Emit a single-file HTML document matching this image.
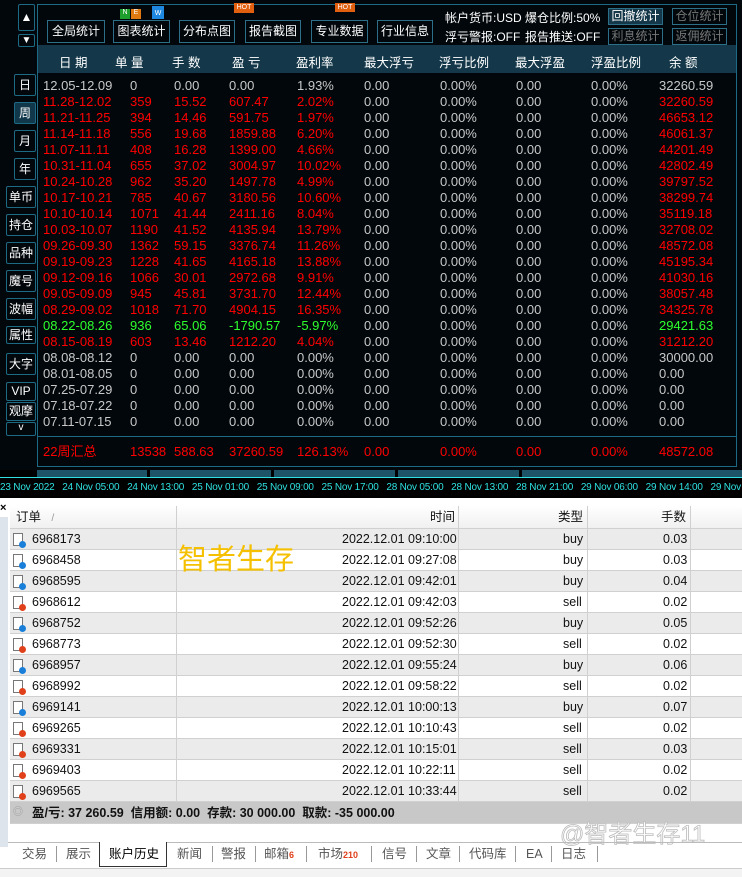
<!DOCTYPE html>
<html><head><meta charset="utf-8"><style>
*{margin:0;padding:0;box-sizing:border-box}
body{width:742px;height:877px;overflow:hidden;background:#fff;font-family:"Liberation Sans","Noto Sans CJK SC",sans-serif;position:relative}
.top{position:absolute;left:0;top:0;width:742px;height:470px;background:#02070b}
.a{position:absolute;white-space:nowrap}
.nb{position:absolute;border:1px solid #1d6a85;color:#fff;font-size:12px;text-align:center;background:#02070b;border-radius:2px}
.box{position:absolute;left:37px;top:4px;width:700px;height:463px;border:1px solid #1d6a85}
.btn{position:absolute;top:20px;height:23px;border:1px solid #2b6f88;color:#fff;font-size:12px;line-height:21px;text-align:center}
.hdr{position:absolute;left:38px;top:45px;width:698px;height:28px;background:#14384a}
.hdr span,.r span{position:absolute}
.hdr span{color:#fff;font-size:12.5px;top:7px}
.r{position:absolute;left:0;width:742px;height:16px;font-size:13px;line-height:16px;color:#c8c8c8}
.red{color:#f00}.grn{color:#2dff2d}
.g{color:#c8c8c8!important}
.tl{position:absolute;top:470px;left:0;width:742px;height:28px;background:#000}
.tb{position:absolute;left:10px;top:506px;width:732px;font-size:12.5px;color:#111}
.row{position:absolute;left:0;width:732px;height:21px;border-bottom:1px solid #d0d0d0;line-height:20px}
.row span{position:absolute}
.row i{position:absolute;top:0;bottom:0;border-left:1px solid #d0d0d0}
.ic{position:absolute;left:3px;top:4px;width:10px;height:13px;border:1px solid #777;background:#fff}
.ic b{position:absolute;left:5px;top:7px;width:7px;height:7px;border-radius:50%}
.tab{position:absolute;top:845px;height:18px;line-height:18px;font-size:12.5px;color:#555}
.sep{position:absolute;top:846px;height:16px;border-left:1px solid #999}
</style></head><body>
<div class="top">
<div class="nb" style="left:18px;top:4px;width:17px;height:27px;line-height:25px">▲</div>
<div class="nb" style="left:18px;top:34px;width:17px;height:13px;line-height:11px;font-size:10px">▼</div>
<div class="nb" style="left:14px;top:74px;width:22px;height:22px;line-height:20px">日</div>
<div class="nb" style="left:14px;top:102px;width:22px;height:22px;line-height:20px;background:#10384a">周</div>
<div class="nb" style="left:14px;top:130px;width:22px;height:22px;line-height:20px">月</div>
<div class="nb" style="left:14px;top:158px;width:22px;height:22px;line-height:20px">年</div>
<div class="nb" style="left:6px;top:186px;width:30px;height:22px;line-height:20px">单币</div>
<div class="nb" style="left:6px;top:214px;width:30px;height:22px;line-height:20px">持仓</div>
<div class="nb" style="left:6px;top:242px;width:30px;height:22px;line-height:20px">品种</div>
<div class="nb" style="left:6px;top:270px;width:30px;height:22px;line-height:20px">魔号</div>
<div class="nb" style="left:6px;top:298px;width:30px;height:22px;line-height:20px">波幅</div>
<div class="nb" style="left:6px;top:326px;width:30px;height:18px;line-height:16px">属性</div>
<div class="nb" style="left:6px;top:353px;width:30px;height:22px;line-height:20px">大字</div>
<div class="nb" style="left:6px;top:382px;width:30px;height:19px;line-height:17px">VIP</div>
<div class="nb" style="left:6px;top:402px;width:30px;height:19px;line-height:17px">观摩</div>
<div class="nb" style="left:6px;top:422px;width:30px;height:14px;line-height:10px;font-size:10px">v</div>
<div class="box"></div>
<div class="btn" style="left:47px;width:58px">全局统计</div>
<div class="btn" style="left:113px;width:57px">图表统计</div>
<div class="btn" style="left:179px;width:56px">分布点图</div>
<div class="btn" style="left:245px;width:56px">报告截图</div>
<div class="btn" style="left:311px;width:57px">专业数据</div>
<div class="btn" style="left:377px;width:56px">行业信息</div>
<div class="a" style="left:120px;top:9px;width:10px;height:10px;background:#1e9e2c;color:#fff;font-size:7px;text-align:center">N</div>
<div class="a" style="left:131px;top:9px;width:10px;height:10px;background:#e07a10;color:#fff;font-size:7px;text-align:center">E</div>
<div class="a" style="left:152px;top:6px;width:12px;height:13px;background:#1e88e0;color:#fff;font-size:7px;text-align:center;line-height:16px">W</div>
<div class="a" style="left:234px;top:3px;width:20px;height:10px;background:#e06010;color:#fff;font-size:7px;text-align:center;line-height:10px">HOT</div>
<div class="a" style="left:335px;top:3px;width:20px;height:9px;background:#e06010;color:#fff;font-size:7px;text-align:center;line-height:9px">HOT</div>
<div class="a" style="left:445px;top:9px;color:#fff;font-size:12px">帐户货币:USD</div>
<div class="a" style="left:525px;top:9px;color:#fff;font-size:12px">爆仓比例:50%</div>
<div class="a" style="left:445px;top:28px;color:#fff;font-size:12px">浮亏警报:OFF</div>
<div class="a" style="left:525px;top:28px;color:#fff;font-size:12px">报告推送:OFF</div>
<div class="a" style="left:608px;top:8px;width:55px;height:17px;border:1px solid #2b6f88;background:#14384a;color:#fff;font-size:12px;text-align:center;line-height:15px">回撤统计</div>
<div class="a" style="left:672px;top:8px;width:55px;height:17px;border:1px solid #2b6f88;color:#777;font-size:12px;text-align:center;line-height:15px">仓位统计</div>
<div class="a" style="left:608px;top:28px;width:55px;height:17px;border:1px solid #2b6f88;color:#777;font-size:12px;text-align:center;line-height:15px">利息统计</div>
<div class="a" style="left:672px;top:28px;width:55px;height:17px;border:1px solid #2b6f88;color:#777;font-size:12px;text-align:center;line-height:15px">返佣统计</div>
<div class="hdr">
<span style="left:21px">日 期</span><span style="left:77px">单 量</span><span style="left:134px">手 数</span><span style="left:194px">盈 亏</span><span style="left:258px">盈利率</span><span style="left:326px">最大浮亏</span><span style="left:401px">浮亏比例</span><span style="left:477px">最大浮盈</span><span style="left:553px">浮盈比例</span><span style="left:631px">余 额</span>
</div>
<div class="a" style="left:38px;top:436px;width:698px;border-top:1px solid #1d6a85"></div>
</div>
<div class="r" style="top:78px"><span style="left:43px">12.05-12.09</span><span style="left:130px">0</span><span style="left:174px">0.00</span><span style="left:229px">0.00</span><span style="left:297px">1.93%</span><span style="left:364px">0.00</span><span style="left:440px">0.00%</span><span style="left:516px">0.00</span><span style="left:591px">0.00%</span><span style="left:659px">32260.59</span></div>
<div class="r red" style="top:94px"><span style="left:43px">11.28-12.02</span><span style="left:130px">359</span><span style="left:174px">15.52</span><span style="left:229px">607.47</span><span style="left:297px">2.02%</span><span class="g" style="left:364px">0.00</span><span class="g" style="left:440px">0.00%</span><span class="g" style="left:516px">0.00</span><span class="g" style="left:591px">0.00%</span><span style="left:659px">32260.59</span></div>
<div class="r red" style="top:110px"><span style="left:43px">11.21-11.25</span><span style="left:130px">394</span><span style="left:174px">14.46</span><span style="left:229px">591.75</span><span style="left:297px">1.97%</span><span class="g" style="left:364px">0.00</span><span class="g" style="left:440px">0.00%</span><span class="g" style="left:516px">0.00</span><span class="g" style="left:591px">0.00%</span><span style="left:659px">46653.12</span></div>
<div class="r red" style="top:126px"><span style="left:43px">11.14-11.18</span><span style="left:130px">556</span><span style="left:174px">19.68</span><span style="left:229px">1859.88</span><span style="left:297px">6.20%</span><span class="g" style="left:364px">0.00</span><span class="g" style="left:440px">0.00%</span><span class="g" style="left:516px">0.00</span><span class="g" style="left:591px">0.00%</span><span style="left:659px">46061.37</span></div>
<div class="r red" style="top:142px"><span style="left:43px">11.07-11.11</span><span style="left:130px">408</span><span style="left:174px">16.28</span><span style="left:229px">1399.00</span><span style="left:297px">4.66%</span><span class="g" style="left:364px">0.00</span><span class="g" style="left:440px">0.00%</span><span class="g" style="left:516px">0.00</span><span class="g" style="left:591px">0.00%</span><span style="left:659px">44201.49</span></div>
<div class="r red" style="top:158px"><span style="left:43px">10.31-11.04</span><span style="left:130px">655</span><span style="left:174px">37.02</span><span style="left:229px">3004.97</span><span style="left:297px">10.02%</span><span class="g" style="left:364px">0.00</span><span class="g" style="left:440px">0.00%</span><span class="g" style="left:516px">0.00</span><span class="g" style="left:591px">0.00%</span><span style="left:659px">42802.49</span></div>
<div class="r red" style="top:174px"><span style="left:43px">10.24-10.28</span><span style="left:130px">962</span><span style="left:174px">35.20</span><span style="left:229px">1497.78</span><span style="left:297px">4.99%</span><span class="g" style="left:364px">0.00</span><span class="g" style="left:440px">0.00%</span><span class="g" style="left:516px">0.00</span><span class="g" style="left:591px">0.00%</span><span style="left:659px">39797.52</span></div>
<div class="r red" style="top:190px"><span style="left:43px">10.17-10.21</span><span style="left:130px">785</span><span style="left:174px">40.67</span><span style="left:229px">3180.56</span><span style="left:297px">10.60%</span><span class="g" style="left:364px">0.00</span><span class="g" style="left:440px">0.00%</span><span class="g" style="left:516px">0.00</span><span class="g" style="left:591px">0.00%</span><span style="left:659px">38299.74</span></div>
<div class="r red" style="top:206px"><span style="left:43px">10.10-10.14</span><span style="left:130px">1071</span><span style="left:174px">41.44</span><span style="left:229px">2411.16</span><span style="left:297px">8.04%</span><span class="g" style="left:364px">0.00</span><span class="g" style="left:440px">0.00%</span><span class="g" style="left:516px">0.00</span><span class="g" style="left:591px">0.00%</span><span style="left:659px">35119.18</span></div>
<div class="r red" style="top:222px"><span style="left:43px">10.03-10.07</span><span style="left:130px">1190</span><span style="left:174px">41.52</span><span style="left:229px">4135.94</span><span style="left:297px">13.79%</span><span class="g" style="left:364px">0.00</span><span class="g" style="left:440px">0.00%</span><span class="g" style="left:516px">0.00</span><span class="g" style="left:591px">0.00%</span><span style="left:659px">32708.02</span></div>
<div class="r red" style="top:238px"><span style="left:43px">09.26-09.30</span><span style="left:130px">1362</span><span style="left:174px">59.15</span><span style="left:229px">3376.74</span><span style="left:297px">11.26%</span><span class="g" style="left:364px">0.00</span><span class="g" style="left:440px">0.00%</span><span class="g" style="left:516px">0.00</span><span class="g" style="left:591px">0.00%</span><span style="left:659px">48572.08</span></div>
<div class="r red" style="top:254px"><span style="left:43px">09.19-09.23</span><span style="left:130px">1228</span><span style="left:174px">41.65</span><span style="left:229px">4165.18</span><span style="left:297px">13.88%</span><span class="g" style="left:364px">0.00</span><span class="g" style="left:440px">0.00%</span><span class="g" style="left:516px">0.00</span><span class="g" style="left:591px">0.00%</span><span style="left:659px">45195.34</span></div>
<div class="r red" style="top:270px"><span style="left:43px">09.12-09.16</span><span style="left:130px">1066</span><span style="left:174px">30.01</span><span style="left:229px">2972.68</span><span style="left:297px">9.91%</span><span class="g" style="left:364px">0.00</span><span class="g" style="left:440px">0.00%</span><span class="g" style="left:516px">0.00</span><span class="g" style="left:591px">0.00%</span><span style="left:659px">41030.16</span></div>
<div class="r red" style="top:286px"><span style="left:43px">09.05-09.09</span><span style="left:130px">945</span><span style="left:174px">45.81</span><span style="left:229px">3731.70</span><span style="left:297px">12.44%</span><span class="g" style="left:364px">0.00</span><span class="g" style="left:440px">0.00%</span><span class="g" style="left:516px">0.00</span><span class="g" style="left:591px">0.00%</span><span style="left:659px">38057.48</span></div>
<div class="r red" style="top:302px"><span style="left:43px">08.29-09.02</span><span style="left:130px">1018</span><span style="left:174px">71.70</span><span style="left:229px">4904.15</span><span style="left:297px">16.35%</span><span class="g" style="left:364px">0.00</span><span class="g" style="left:440px">0.00%</span><span class="g" style="left:516px">0.00</span><span class="g" style="left:591px">0.00%</span><span style="left:659px">34325.78</span></div>
<div class="r grn" style="top:318px"><span style="left:43px">08.22-08.26</span><span style="left:130px">936</span><span style="left:174px">65.06</span><span style="left:229px">-1790.57</span><span style="left:297px">-5.97%</span><span class="g" style="left:364px">0.00</span><span class="g" style="left:440px">0.00%</span><span class="g" style="left:516px">0.00</span><span class="g" style="left:591px">0.00%</span><span style="left:659px">29421.63</span></div>
<div class="r red" style="top:334px"><span style="left:43px">08.15-08.19</span><span style="left:130px">603</span><span style="left:174px">13.46</span><span style="left:229px">1212.20</span><span style="left:297px">4.04%</span><span class="g" style="left:364px">0.00</span><span class="g" style="left:440px">0.00%</span><span class="g" style="left:516px">0.00</span><span class="g" style="left:591px">0.00%</span><span style="left:659px">31212.20</span></div>
<div class="r" style="top:350px"><span style="left:43px">08.08-08.12</span><span style="left:130px">0</span><span style="left:174px">0.00</span><span style="left:229px">0.00</span><span style="left:297px">0.00%</span><span style="left:364px">0.00</span><span style="left:440px">0.00%</span><span style="left:516px">0.00</span><span style="left:591px">0.00%</span><span style="left:659px">30000.00</span></div>
<div class="r" style="top:366px"><span style="left:43px">08.01-08.05</span><span style="left:130px">0</span><span style="left:174px">0.00</span><span style="left:229px">0.00</span><span style="left:297px">0.00%</span><span style="left:364px">0.00</span><span style="left:440px">0.00%</span><span style="left:516px">0.00</span><span style="left:591px">0.00%</span><span style="left:659px">0.00</span></div>
<div class="r" style="top:382px"><span style="left:43px">07.25-07.29</span><span style="left:130px">0</span><span style="left:174px">0.00</span><span style="left:229px">0.00</span><span style="left:297px">0.00%</span><span style="left:364px">0.00</span><span style="left:440px">0.00%</span><span style="left:516px">0.00</span><span style="left:591px">0.00%</span><span style="left:659px">0.00</span></div>
<div class="r" style="top:398px"><span style="left:43px">07.18-07.22</span><span style="left:130px">0</span><span style="left:174px">0.00</span><span style="left:229px">0.00</span><span style="left:297px">0.00%</span><span style="left:364px">0.00</span><span style="left:440px">0.00%</span><span style="left:516px">0.00</span><span style="left:591px">0.00%</span><span style="left:659px">0.00</span></div>
<div class="r" style="top:414px"><span style="left:43px">07.11-07.15</span><span style="left:130px">0</span><span style="left:174px">0.00</span><span style="left:229px">0.00</span><span style="left:297px">0.00%</span><span style="left:364px">0.00</span><span style="left:440px">0.00%</span><span style="left:516px">0.00</span><span style="left:591px">0.00%</span><span style="left:659px">0.00</span></div>
<div class="r red" style="top:444px"><span style="left:43px">22周汇总</span><span style="left:130px">13538</span><span style="left:174px">588.63</span><span style="left:229px">37260.59</span><span style="left:297px">126.13%</span><span style="left:364px">0.00</span><span style="left:440px">0.00%</span><span style="left:516px">0.00</span><span style="left:591px">0.00%</span><span style="left:659px">48572.08</span></div>
<div class="tl">
<div class="a" style="left:37px;top:0;width:110px;height:7px;background:#1d5468"></div>
<div class="a" style="left:150px;top:0;width:121px;height:7px;background:#1d5468"></div>
<div class="a" style="left:274px;top:0;width:121px;height:7px;background:#1d5468"></div>
<div class="a" style="left:398px;top:0;width:121px;height:7px;background:#1d5468"></div>
<div class="a" style="left:522px;top:0;width:220px;height:7px;background:#1d5468"></div>
<div class="a" style="left:0;top:7px;width:742px;border-top:1px solid #2fe0e0"></div>
<div class="a" style="left:0;top:12px;color:#2fe0e0;font-size:10px;letter-spacing:-0.2px">23 Nov 2022 &nbsp; 24 Nov 05:00 &nbsp; 24 Nov 13:00 &nbsp; 25 Nov 01:00 &nbsp; 25 Nov 09:00 &nbsp; 25 Nov 17:00 &nbsp; 28 Nov 05:00 &nbsp; 28 Nov 13:00 &nbsp; 28 Nov 21:00 &nbsp; 29 Nov 06:00 &nbsp; 29 Nov 14:00 &nbsp; 29 Nov 22</div>
</div>
<div class="a" style="left:0;top:498px;width:742px;height:379px;background:#fff"></div>
<div class="a" style="left:0;top:517px;width:8px;height:330px;background:#dde4ec"></div>
<div class="a" style="left:0;top:502px;font-size:11px;font-weight:bold">×</div>
<div class="tb">
<div class="row" style="top:0;height:23px;background:linear-gradient(#fff,#f0f0f0)"><span style="left:6px;top:1px">订单 &nbsp; <small style="color:#999">/</small></span><span style="left:420px;top:1px">时间</span><span style="left:548px;top:1px">类型</span><span style="left:651px;top:1px">手数</span><i style="left:166px"></i><i style="left:448px"></i><i style="left:577px"></i><i style="left:680px"></i></div>
</div>
<div class="tb" style="top:529px">
<div class="row" style="top:0;background:#ebebeb"><div class="ic"><b style="background:#1a7fd8"></b></div><span style="left:22px">6968173</span><span style="left:332px">2022.12.01 09:10:00</span><span style="left:553px">buy</span><span style="left:653px">0.03</span><i style="left:166px"></i><i style="left:448px"></i><i style="left:577px"></i><i style="left:680px"></i></div>
<div class="row" style="top:21px;background:#fff"><div class="ic"><b style="background:#1a7fd8"></b></div><span style="left:22px">6968458</span><span style="left:332px">2022.12.01 09:27:08</span><span style="left:553px">buy</span><span style="left:653px">0.03</span><i style="left:166px"></i><i style="left:448px"></i><i style="left:577px"></i><i style="left:680px"></i></div>
<div class="row" style="top:42px;background:#ebebeb"><div class="ic"><b style="background:#1a7fd8"></b></div><span style="left:22px">6968595</span><span style="left:332px">2022.12.01 09:42:01</span><span style="left:553px">buy</span><span style="left:653px">0.04</span><i style="left:166px"></i><i style="left:448px"></i><i style="left:577px"></i><i style="left:680px"></i></div>
<div class="row" style="top:63px;background:#fff"><div class="ic"><b style="background:#e0401a"></b></div><span style="left:22px">6968612</span><span style="left:332px">2022.12.01 09:42:03</span><span style="left:553px">sell</span><span style="left:653px">0.02</span><i style="left:166px"></i><i style="left:448px"></i><i style="left:577px"></i><i style="left:680px"></i></div>
<div class="row" style="top:84px;background:#ebebeb"><div class="ic"><b style="background:#1a7fd8"></b></div><span style="left:22px">6968752</span><span style="left:332px">2022.12.01 09:52:26</span><span style="left:553px">buy</span><span style="left:653px">0.05</span><i style="left:166px"></i><i style="left:448px"></i><i style="left:577px"></i><i style="left:680px"></i></div>
<div class="row" style="top:105px;background:#fff"><div class="ic"><b style="background:#e0401a"></b></div><span style="left:22px">6968773</span><span style="left:332px">2022.12.01 09:52:30</span><span style="left:553px">sell</span><span style="left:653px">0.02</span><i style="left:166px"></i><i style="left:448px"></i><i style="left:577px"></i><i style="left:680px"></i></div>
<div class="row" style="top:126px;background:#ebebeb"><div class="ic"><b style="background:#1a7fd8"></b></div><span style="left:22px">6968957</span><span style="left:332px">2022.12.01 09:55:24</span><span style="left:553px">buy</span><span style="left:653px">0.06</span><i style="left:166px"></i><i style="left:448px"></i><i style="left:577px"></i><i style="left:680px"></i></div>
<div class="row" style="top:147px;background:#fff"><div class="ic"><b style="background:#e0401a"></b></div><span style="left:22px">6968992</span><span style="left:332px">2022.12.01 09:58:22</span><span style="left:553px">sell</span><span style="left:653px">0.02</span><i style="left:166px"></i><i style="left:448px"></i><i style="left:577px"></i><i style="left:680px"></i></div>
<div class="row" style="top:168px;background:#ebebeb"><div class="ic"><b style="background:#1a7fd8"></b></div><span style="left:22px">6969141</span><span style="left:332px">2022.12.01 10:00:13</span><span style="left:553px">buy</span><span style="left:653px">0.07</span><i style="left:166px"></i><i style="left:448px"></i><i style="left:577px"></i><i style="left:680px"></i></div>
<div class="row" style="top:189px;background:#fff"><div class="ic"><b style="background:#e0401a"></b></div><span style="left:22px">6969265</span><span style="left:332px">2022.12.01 10:10:43</span><span style="left:553px">sell</span><span style="left:653px">0.02</span><i style="left:166px"></i><i style="left:448px"></i><i style="left:577px"></i><i style="left:680px"></i></div>
<div class="row" style="top:210px;background:#ebebeb"><div class="ic"><b style="background:#e0401a"></b></div><span style="left:22px">6969331</span><span style="left:332px">2022.12.01 10:15:01</span><span style="left:553px">sell</span><span style="left:653px">0.03</span><i style="left:166px"></i><i style="left:448px"></i><i style="left:577px"></i><i style="left:680px"></i></div>
<div class="row" style="top:231px;background:#fff"><div class="ic"><b style="background:#e0401a"></b></div><span style="left:22px">6969403</span><span style="left:332px">2022.12.01 10:22:11</span><span style="left:553px">sell</span><span style="left:653px">0.02</span><i style="left:166px"></i><i style="left:448px"></i><i style="left:577px"></i><i style="left:680px"></i></div>
<div class="row" style="top:252px;background:#ebebeb"><div class="ic"><b style="background:#e0401a"></b></div><span style="left:22px">6969565</span><span style="left:332px">2022.12.01 10:33:44</span><span style="left:553px">sell</span><span style="left:653px">0.02</span><i style="left:166px"></i><i style="left:448px"></i><i style="left:577px"></i><i style="left:680px"></i></div>
<div class="row" style="top:273px;height:22px;background:#c8c8c8;font-weight:bold;line-height:22px"><span style="left:3px;color:#999;font-weight:normal;font-size:10px">◎</span><span style="left:22px">盈/亏: 37 260.59 &nbsp;信用额: 0.00 &nbsp;存款: 30 000.00 &nbsp;取款: -35 000.00</span></div>
</div>
<div class="a" style="left:178px;top:536px;color:#f5c000;font-size:29px">智者生存</div>
<div class="a" style="left:560px;top:814px;color:#fff;font-size:24px;-webkit-text-stroke:0.8px #bbb">@智者生存11</div>
<div class="a" style="left:8px;top:842px;width:734px;border-top:1px solid #bbb"></div>
<div class="a" style="left:99px;top:842px;width:68px;height:25px;background:#fff;border:1px solid #333;border-top:none"></div>
<div class="tab" style="left:22px">交易</div><div class="tab" style="left:66px">展示</div><div class="tab" style="left:109px;color:#000">账户历史</div><div class="tab" style="left:177px">新闻</div><div class="tab" style="left:221px">警报</div><div class="tab" style="left:264px">邮箱<small style="color:#e0401a;font-size:9px;font-weight:bold">6</small></div><div class="tab" style="left:318px">市场<small style="color:#e0401a;font-size:9px;font-weight:bold">210</small></div><div class="tab" style="left:382px">信号</div><div class="tab" style="left:426px">文章</div><div class="tab" style="left:469px">代码库</div><div class="tab" style="left:526px">EA</div><div class="tab" style="left:561px">日志</div>
<div class="sep" style="left:56px"></div><div class="sep" style="left:212px"></div><div class="sep" style="left:255px"></div><div class="sep" style="left:306px"></div><div class="sep" style="left:371px"></div><div class="sep" style="left:416px"></div><div class="sep" style="left:459px"></div><div class="sep" style="left:515px"></div><div class="sep" style="left:551px"></div><div class="sep" style="left:597px"></div>
<div class="a" style="left:0;top:868px;width:742px;border-top:1px solid #ccc;height:9px;background:#f3f3f3"></div>
</body></html>
